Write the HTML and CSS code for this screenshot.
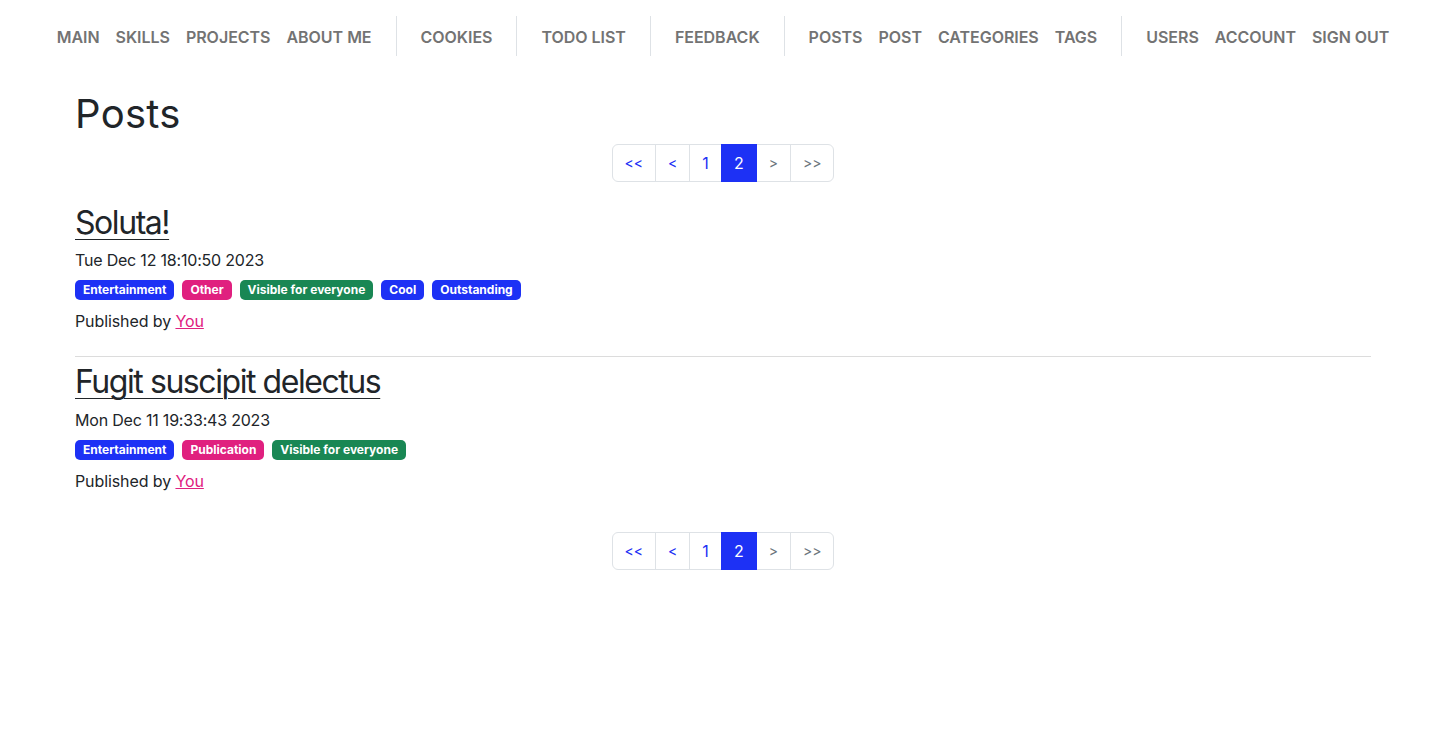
FILE: index.html
```html
<!DOCTYPE html>
<html lang="en">
<head>
<meta charset="utf-8">
<title>Posts</title>
<link rel="stylesheet" href="styles.css">
</head>
<body>
<nav class="topnav">
  <div class="group">
    <a class="nav-link" href="#">Main</a>
    <a class="nav-link" href="#">Skills</a>
    <a class="nav-link" href="#">Projects</a>
    <a class="nav-link" href="#">About me</a>
  </div>
  <div class="group">
    <a class="nav-link" href="#">Cookies</a>
  </div>
  <div class="group">
    <a class="nav-link" href="#">Todo list</a>
  </div>
  <div class="group">
    <a class="nav-link" href="#">Feedback</a>
  </div>
  <div class="group">
    <a class="nav-link" href="#">Posts</a>
    <a class="nav-link" href="#">Post</a>
    <a class="nav-link" href="#">Categories</a>
    <a class="nav-link" href="#">Tags</a>
  </div>
  <div class="group">
    <a class="nav-link" href="#">Users</a>
    <a class="nav-link" href="#">Account</a>
    <a class="nav-link" href="#">Sign out</a>
  </div>
</nav>
<main class="container">
  <h1 class="page-title">Posts</h1>
  <ul class="pagination">
    <li class="page-item"><a class="page-link small" href="#">&lt;&lt;</a></li>
    <li class="page-item"><a class="page-link small" href="#">&lt;</a></li>
    <li class="page-item"><a class="page-link" href="#">1</a></li>
    <li class="page-item active"><span class="page-link">2</span></li>
    <li class="page-item disabled"><span class="page-link small">&gt;</span></li>
    <li class="page-item disabled"><span class="page-link small">&gt;&gt;</span></li>
  </ul>
  <article class="post">
    <h2 class="post-title"><a href="#">Soluta!</a></h2>
    <p class="post-date">Tue Dec 12 18:10:50 2023</p>
    <div class="badges">
      <span class="badge blue">Entertainment</span>
      <span class="badge pink">Other</span>
      <span class="badge green">Visible for everyone</span>
      <span class="badge blue">Cool</span>
      <span class="badge blue">Outstanding</span>
    </div>
    <p class="post-author">Published by <a href="#">You</a></p>
  </article>
  <hr class="divider">
  <article class="post">
    <h2 class="post-title"><a href="#">Fugit suscipit delectus</a></h2>
    <p class="post-date">Mon Dec 11 19:33:43 2023</p>
    <div class="badges">
      <span class="badge blue">Entertainment</span>
      <span class="badge pink">Publication</span>
      <span class="badge green">Visible for everyone</span>
    </div>
    <p class="post-author">Published by <a href="#">You</a></p>
  </article>
  <ul class="pagination bottom">
    <li class="page-item"><a class="page-link small" href="#">&lt;&lt;</a></li>
    <li class="page-item"><a class="page-link small" href="#">&lt;</a></li>
    <li class="page-item"><a class="page-link" href="#">1</a></li>
    <li class="page-item active"><span class="page-link">2</span></li>
    <li class="page-item disabled"><span class="page-link small">&gt;</span></li>
    <li class="page-item disabled"><span class="page-link small">&gt;&gt;</span></li>
  </ul>
</main>
</body>
</html>
```
FILE: styles.css
```css
* { box-sizing: border-box; }
body {
  margin: 0;
  font-family: Inter, "Noto Sans", sans-serif;
  font-size: 16px;
  line-height: 1.5;
  color: #212529;
  background: #fff;
}
.topnav {
  display: flex;
  justify-content: center;
  padding-top: 16px;
}
.group {
  display: flex;
  padding: 0 16px;
  border-left: 1px solid #dee2e6;
}
.group:first-child { border-left: none; }
.nav-link {
  display: block;
  padding: 9px 8px 7px;
  color: #737373;
  font-weight: 600;
  text-transform: uppercase;
  text-decoration: none;
  line-height: 24px;
  letter-spacing: -0.03px;
}
.container {
  max-width: 1320px;
  margin: 0 auto;
  padding: 0 12px;
}
.page-title {
  margin: 34px 0 6px;
  font-size: 40px;
  font-weight: 400;
  line-height: 1.2;
  letter-spacing: 0.3px;
}
.pagination {
  list-style: none;
  padding: 0;
  margin: 0 0 22px;
  display: flex;
  justify-content: center;
}
.pagination.bottom { margin-top: 39px; }
.page-link {
  display: block;
  padding: 6px 12px;
  border: 1px solid #dee2e6;
  margin-left: -1px;
  color: #1d31f5;
  text-decoration: none;
  line-height: 24px;
  font-size: 16px;
}
.page-link.small { font-size: 14px; }
.page-item:first-child .page-link { border-radius: 6px 0 0 6px; margin-left: 0; }
.page-item:last-child .page-link { border-radius: 0 6px 6px 0; }
.page-item.active .page-link {
  background: #1d31f5;
  border-color: #1d31f5;
  color: #fff;
  position: relative;
  z-index: 1;
}
.page-item.disabled .page-link { color: #6c757d; }
.post-title {
  margin: 0 0 6px;
  font-size: 32px;
  font-weight: 400;
  line-height: 1.2;
  letter-spacing: -0.045em;
}
.post-title a {
  color: #212529;
  text-decoration: underline;
  text-underline-offset: 5px;
  text-decoration-thickness: 1px;
}
.post-date { margin: 0 0 8px; letter-spacing: -0.2px; }
.badges { display: flex; gap: 8px; margin-bottom: 9px; }
.badge {
  display: inline-block;
  padding: 3px 8px;
  font-size: 12px;
  font-weight: 700;
  line-height: 14px;
  color: #fff;
  border-radius: 5px;
}
.badge.blue { background: #1d31f5; }
.badge.pink { background: #e0207f; }
.badge.green { background: #198754; }
.post-author { margin: 0; letter-spacing: -0.1px; }
.post-author a { color: #e0207f; }
.divider {
  margin: 23px 0 6px;
  border: 0;
  border-top: 1px solid #dcdcdc;
}
```
